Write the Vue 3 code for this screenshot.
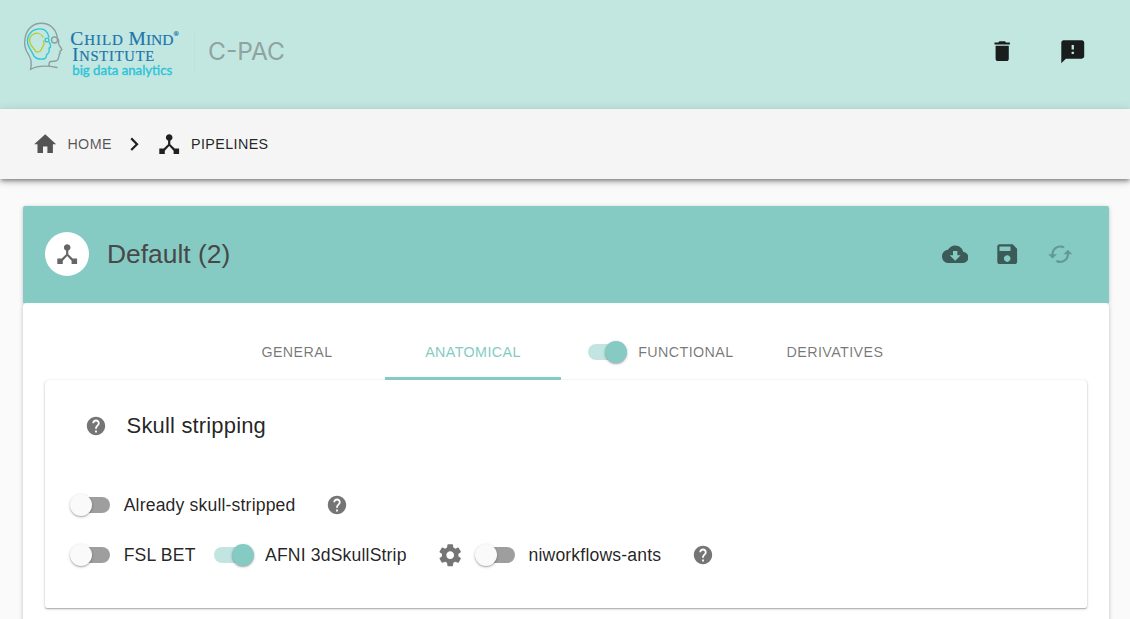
<script setup>
import { h } from 'vue'

const paths = {
  trash: 'M6 19c0 1.1.9 2 2 2h8c1.1 0 2-.9 2-2V7H6v12zM19 4h-3.5l-1-1h-5l-1 1H5v2h14V4z',
  feedback: 'M20 2H4c-1.1 0-1.99.9-1.99 2L2 22l4-4h14c1.1 0 2-.9 2-2V4c0-1.1-.9-2-2-2zm-7 12h-2v-2h2v2zm0-4h-2V6h2v4z',
  home: 'M10 20v-6h4v6h5v-8h3L12 3 2 12h3v8z',
  chevron: 'M10 6L8.59 7.41 13.17 12l-4.58 4.59L10 18l6-6z',
  hub: 'M17 16l-4-4V8.82C14.16 8.4 15 7.3 15 6c0-1.66-1.34-3-3-3S9 4.34 9 6c0 1.3.84 2.4 2 2.82V12l-4 4H3v5h5v-3.05l4-4.2 4 4.2V21h5v-5h-4z',
  cloud: 'M19.35 10.04C18.67 6.59 15.64 4 12 4 9.11 4 6.6 5.64 5.35 8.04 2.34 8.36 0 10.91 0 14c0 3.31 2.69 6 6 6h13c2.76 0 5-2.24 5-5 0-2.64-2.05-4.78-4.65-4.96zM17 13l-5 5-5-5h3V9h4v4h3z',
  save: 'M17 3H5c-1.11 0-2 .9-2 2v14c0 1.1.89 2 2 2h14c1.1 0 2-.9 2-2V7l-4-4zm-5 16c-1.66 0-3-1.34-3-3s1.34-3 3-3 3 1.34 3 3-1.34 3-3 3zm3-10H5V5h10v4z',
  cached: 'M19 8l-4 4h3c0 3.31-2.69 6-6 6-1.01 0-1.97-.25-2.8-.7l-1.46 1.46C8.97 19.54 10.43 20 12 20c4.42 0 8-3.58 8-8h3l-4-4zM6 12c0-3.31 2.69-6 6-6 1.01 0 1.97.25 2.8.7l1.46-1.46C15.03 4.46 13.57 4 12 4c-4.42 0-8 3.58-8 8H1l4 4 4-4H6z',
  help: 'M12 2C6.48 2 2 6.48 2 12s4.48 10 10 10 10-4.48 10-10S17.52 2 12 2zm1 17h-2v-2h2v2zm2.07-7.75l-.9.92C13.45 12.9 13 13.5 13 15h-2v-.5c0-1.1.45-2.1 1.17-2.83l1.24-1.26c.37-.36.59-.86.59-1.41 0-1.1-.9-2-2-2s-2 .9-2 2H8c0-2.21 1.79-4 4-4s4 1.79 4 4c0 .88-.36 1.68-.93 2.25z',
  gear: 'M19.43 12.98c.04-.32.07-.64.07-.98s-.03-.66-.07-.98l2.11-1.65c.19-.15.24-.42.12-.64l-2-3.46c-.12-.22-.39-.3-.61-.22l-2.49 1c-.52-.4-1.08-.73-1.69-.98l-.38-2.65C14.46 2.18 14.25 2 14 2h-4c-.25 0-.46.18-.49.42l-.38 2.65c-.61.25-1.17.59-1.69.98l-2.49-1c-.23-.09-.49 0-.61.22l-2 3.46c-.13.22-.07.49.12.64l2.11 1.65c-.04.32-.07.65-.07.98s.03.66.07.98l-2.11 1.65c-.19.15-.24.42-.12.64l2 3.46c.12.22.39.3.61.22l2.49-1c.52.4 1.08.73 1.69.98l.38 2.65c.03.24.24.42.49.42h4c.25 0 .46-.18.49-.42l.38-2.65c.61-.25 1.17-.59 1.69-.98l2.49 1c.23.09.49 0 .61-.22l2-3.46c.12-.22.07-.49-.12-.64l-2.11-1.65zM12 15.5c-1.93 0-3.5-1.57-3.5-3.5s1.57-3.5 3.5-3.5 3.5 1.57 3.5 3.5-1.57 3.5-3.5 3.5z',
}

const Icon = (props) =>
  h('svg', { viewBox: '0 0 24 24', width: props.size || 26.4, height: props.size || 26.4, fill: 'currentColor' }, [
    h('path', { d: paths[props.name] }),
  ])
Icon.props = ['name', 'size']
</script>

<template>
  <div class="page">
    <header class="top">
      <svg class="logo" width="160" height="62" viewBox="0 0 160 62">
        <g fill="none" stroke-width="1.4" stroke-linecap="round" stroke-linejoin="round">
          <path stroke="#8d9f9f" d="M6.500 50.500C8 45 7.500 41 5 36.500C1 31 -.2 24 1.400 17.500C3.500 8.800 10 4.200 17.500 4.300C26 4.400 32 10 33.200 18M33.600 19.500C35 20.500 34.800 22.500 34.500 24.500C34.700 26.500 37.200 28.500 37.800 30.500C37.500 31.800 35.800 31.500 35.800 32.700L36.300 34.200L35 35.400C35.700 36.700 34.700 37.500 34.500 39C34.200 42.500 30.700 42.300 26.500 42.500C25 43 25 45 25 46.500M6.500 50.500C13 46.500 23 46.500 33 48.500" />
          <circle stroke="#8d9f9f" cx="30.500" cy="21" r="3" />
          <path stroke="#30c4d8" d="M24.800 18C23.800 12.500 20 9.400 14.800 9.900C7.800 10.500 3.200 16 3.500 22.500C3.700 28.500 8 32 10 37.200C12 40.500 18 40.500 21 39.500C23 38.500 21.500 35.500 24 34.300C26 33 25 30.500 25.200 29C28 28 26 25.500 25.500 23.500" />
          <circle stroke="#30c4d8" cx="23" cy="21" r="1.900" />
          <path stroke="#b9cc34" d="M19 18C17.500 15 14 13.500 10.500 14.700C6 16 4.500 21 6.500 25C7.500 28 10.500 29 11.500 32.300C13.500 33.300 16 33 17 31C18.500 29.500 18.300 27.500 19.700 25.800C21 25 19.500 23.500 19.500 22" />
        </g>
        <g class="logo-serif">
          <text x="46.300" y="25.800" font-size="19.500" textLength="52.500" lengthAdjust="spacing">C<tspan font-size="15">HILD</tspan></text>
          <text x="104.500" y="25.800" font-size="19.500" textLength="45" lengthAdjust="spacingAndGlyphs">M<tspan font-size="15.500">IND</tspan></text>
          <text x="149.500" y="17" font-size="7">®</text>
          <text x="48.200" y="42.200" font-size="18.500" textLength="82" lengthAdjust="spacing">I<tspan font-size="14.500">NSTITUTE</tspan></text>
        </g>
        <text class="logo-tag" x="48.300" y="55.800" textLength="100" lengthAdjust="spacingAndGlyphs">big data analytics</text>
      </svg>
      <span class="divider"></span>
      <svg class="brand" width="80" height="32" viewBox="0 0 80 32">
        <text x="0" y="24" textLength="77" lengthAdjust="spacingAndGlyphs">C-PAC</text>
      </svg>
      <div class="top-actions">
        <Icon name="trash" />
        <Icon name="feedback" size="27.500" />
      </div>
    </header>

    <nav class="crumbs">
      <a class="crumb muted"><Icon name="home" /><span>HOME</span></a>
      <Icon name="chevron" class="sep" />
      <a class="crumb"><Icon name="hub" /><span>PIPELINES</span></a>
    </nav>

    <main class="card">
      <div class="card-head">
        <span class="avatar"><Icon name="hub" /></span>
        <h1>Default (2)</h1>
        <div class="head-actions">
          <Icon name="cloud" />
          <Icon name="save" />
          <Icon name="cached" class="disabled" />
        </div>
      </div>
      <div class="card-body">
        <div class="tabs">
          <span class="tab">GENERAL</span>
          <span class="tab active">ANATOMICAL</span>
          <span class="tab with-switch"><i class="switch on"></i><span>FUNCTIONAL</span></span>
          <span class="tab">DERIVATIVES</span>
        </div>
        <section class="panel">
          <h2><Icon name="help" size="22" /><span>Skull stripping</span></h2>
          <div class="row">
            <i class="switch"></i><label>Already skull-stripped</label>
            <Icon name="help" size="22" class="help" />
          </div>
          <div class="row">
            <i class="switch"></i><label class="bet">FSL BET</label>
            <i class="switch on"></i><label class="afni">AFNI 3dSkullStrip</label>
            <Icon name="gear" class="gear" />
            <i class="switch"></i><label>niworkflows-ants</label>
            <Icon name="help" size="22" class="help" />
          </div>
        </section>
      </div>
    </main>
  </div>
</template>

<style>
body { background: #fafafa; }
</style>

<style scoped>
* { box-sizing: border-box; }
.page {
  height: 619px;
  overflow: hidden;
  font-family: "Liberation Sans", Arial, sans-serif;
  color: rgba(0, 0, 0, 0.87);
}
svg { display: block; flex: none; }
.top {
  height: 109px;
  padding: 0 44px 6px 24px;
  display: flex;
  align-items: center;
  background: #c2e7e0;
}
.logo { margin-top: -4px; overflow: visible; }
.logo-serif {
  fill: #1b75ae;
  stroke: #1b75ae;
  stroke-width: 0.2;
  font-family: "Liberation Serif", serif;
}
.logo-tag {
  fill: #2cc3d8;
  stroke: #2cc3d8;
  stroke-width: 0.35;
  font: 12.5px Lato, sans-serif;
}
.divider { width: 1px; height: 44px; margin-left: 10px; background: #bce2dc; }
.brand { margin-left: 13px; fill: #8fa3a0; font: 24px Inter, sans-serif; }
.top-actions { margin-left: auto; display: flex; align-items: center; gap: 43px; }
.crumbs {
  position: relative;
  height: 70px;
  padding-left: 32.4px;
  display: flex;
  align-items: center;
  background: #f5f5f5;
  box-shadow: 0 2px 4px -1px rgba(0, 0, 0, 0.4), 0 4px 5px rgba(0, 0, 0, 0.14), 0 1px 10px rgba(0, 0, 0, 0.12);
}
.crumb {
  display: flex;
  align-items: center;
  gap: 8.6px;
  font-size: 14.3px;
  letter-spacing: 0.41px;
}
.muted { color: rgba(0, 0, 0, 0.66); }
.sep { margin: 0 8.7px 0 9px; }
.card {
  width: 1086px;
  margin: 27px 0 0 23px;
}
.card-head {
  height: 97px;
  padding: 0 36px 1px 22px;
  display: flex;
  align-items: center;
  background: #85cbc4;
  border-radius: 2px 2px 0 0;
  box-shadow: 0 1px 4px rgba(0, 0, 0, 0.22);
}
.avatar {
  width: 44px;
  height: 44px;
  display: flex;
  align-items: center;
  justify-content: center;
  border-radius: 50%;
  background: #fff;
  color: #666;
}
h1, h2 { margin: 0; font-weight: 400; }
h1 { margin-left: 18px; font-size: 26.4px; color: #484848; }
.head-actions { margin-left: auto; display: flex; gap: 26px; color: #3b5b58; }
.disabled { color: #619a94; }
.card-body {
  position: relative;
  height: 330px;
  padding: 25px 22px 0;
  background: #fff;
  border-radius: 4px 4px 0 0;
  box-shadow: 0 1px 4px rgba(0, 0, 0, 0.24);
  clip-path: inset(0 -6px);
}
.tabs {
  height: 52px;
  display: flex;
  justify-content: center;
  font-size: 14.3px;
  letter-spacing: 0.41px;
  color: rgba(0, 0, 0, 0.54);
}
.tab {
  width: 176px;
  display: flex;
  align-items: center;
  justify-content: center;
  padding-bottom: 4px;
}
.tab.active {
  position: relative;
  z-index: 1;
  color: #85cbc4;
}
.tab.active::after {
  content: "";
  position: absolute;
  left: 0;
  right: 0;
  bottom: 0;
  height: 3px;
  background: #85cbc4;
}
.tab.with-switch { width: 186px; padding-left: 13.5px; gap: 10.400px; }
.switch {
  position: relative;
  flex: none;
  width: 40px;
  height: 24px;
}
.switch::before {
  content: "";
  position: absolute;
  left: 3px;
  top: 4px;
  width: 37px;
  height: 16px;
  border-radius: 8px;
  background: #9e9e9e;
}
.switch::after {
  content: "";
  position: absolute;
  left: 0;
  top: 1px;
  width: 22px;
  height: 22px;
  border-radius: 50%;
  background: #fafafa;
  box-shadow: 0 1px 3px rgba(0, 0, 0, 0.24), 0 1px 1px rgba(0, 0, 0, 0.16);
}
.switch.on::before { left: 0; background: #c2e5e2; }
.switch.on::after { left: 17.5px; background: #85cbc4; }
.panel {
  height: 228px;
  padding: 21px 25px 0;
  border-radius: 4px 4px 2px 2px;
  background: #fff;
  box-shadow: 0 1px 3px rgba(0, 0, 0, 0.2), 0 1px 1px rgba(0, 0, 0, 0.18), 0 0 1px rgba(0, 0, 0, 0.12);
}
h2 {
  height: 50px;
  margin-bottom: 29px;
  padding-left: 15px;
  display: flex;
  align-items: center;
  gap: 19.6px;
  font-size: 22px;
  letter-spacing: 0.165px;
}
h2 svg, .help, .gear { color: #757575; }
.row {
  height: 50px;
  display: flex;
  align-items: center;
  font-size: 17.6px;
  letter-spacing: 0.165px;
}
label { margin-left: 13.7px; }
.help { margin-left: 30.6px; }
.bet { width: 90.5px; }
.afni { margin-left: 10.8px; }
.gear { margin: 0 11.4px 0 30.4px; }
</style>
